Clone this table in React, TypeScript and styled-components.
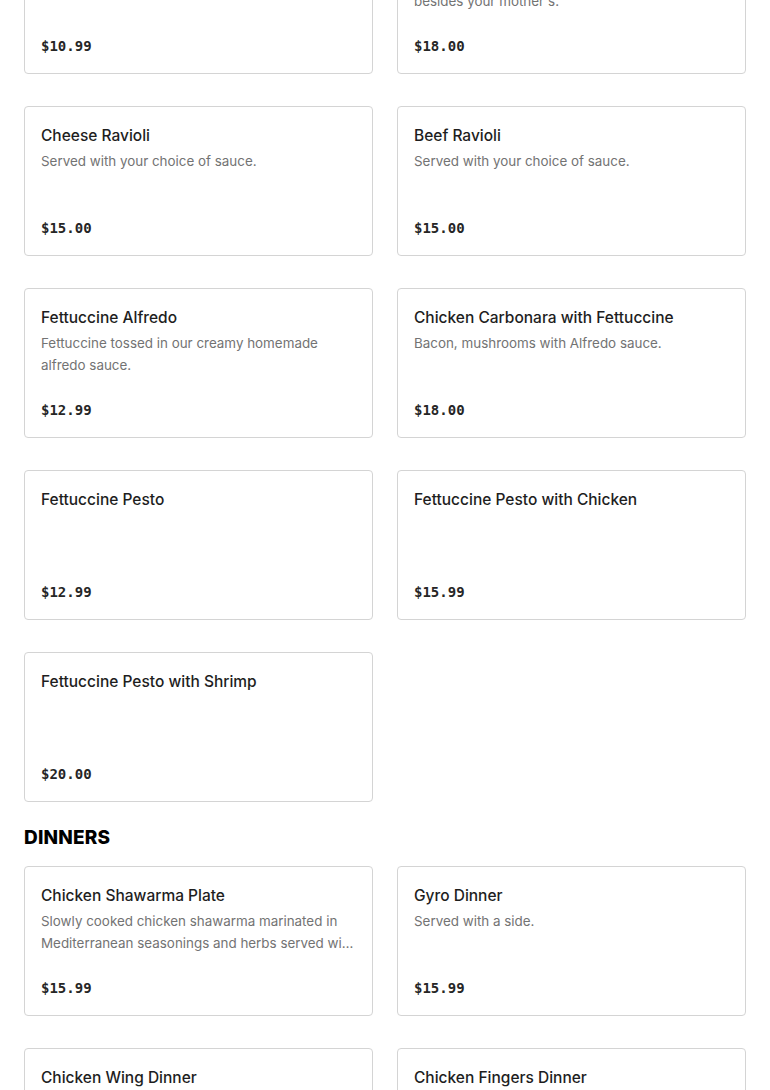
import React from "react";
import styled, { createGlobalStyle } from "styled-components";

const GlobalStyle = createGlobalStyle`
  html, body {
    margin: 0;
    padding: 0;
    background: #ffffff;
    overflow: hidden;
  }
  body {
    font-family: Inter, "Noto Sans", sans-serif;
    -webkit-font-smoothing: antialiased;
  }
`;

const Page = styled.div`
  padding: 0 24px;
  margin-top: -76px;
`;

const SectionTitle = styled.h2`
  margin: 24px 0 16px;
  font-size: 19px;
  line-height: 24px;
  font-weight: 800;
  letter-spacing: 0.2px;
  color: #000;
  text-transform: uppercase;
`;

const Grid = styled.div`
  display: grid;
  grid-template-columns: 1fr 1fr;
  column-gap: 24px;
  row-gap: 32px;
`;

const Card = styled.div`
  box-sizing: border-box;
  height: 150px;
  border: 1px solid #d4d4d4;
  border-radius: 4px;
  padding: 16px;
  display: flex;
  flex-direction: column;
  background: #fff;
`;

const Name = styled.div`
  font-size: 15.5px;
  line-height: 25px;
  font-weight: 500;
  color: #1e1e1e;
`;

const Desc = styled.div`
  margin-top: 2px;
  font-size: 13.4px;
  line-height: 22px;
  color: #737373;
  display: -webkit-box;
  -webkit-line-clamp: 2;
  -webkit-box-orient: vertical;
  overflow: hidden;
`;

const Price = styled.div`
  margin-top: auto;
  font-family: "DejaVu Sans Mono", "Liberation Mono", monospace;
  font-size: 14px;
  line-height: 22px;
  font-weight: 700;
  color: #262626;
`;

type Item = { name: string; desc?: string; price: string };

const pasta: Item[] = [
  { name: "Spaghetti with Meat Sauce", desc: "Our homemade meat sauce.", price: "$10.99" },
  {
    name: "Homemade Lasagna",
    desc: "Homemade lasagna, the best you will ever have besides your mother's.",
    price: "$18.00",
  },
  { name: "Cheese Ravioli", desc: "Served with your choice of sauce.", price: "$15.00" },
  { name: "Beef Ravioli", desc: "Served with your choice of sauce.", price: "$15.00" },
  {
    name: "Fettuccine Alfredo",
    desc: "Fettuccine tossed in our creamy homemade alfredo sauce.",
    price: "$12.99",
  },
  {
    name: "Chicken Carbonara with Fettuccine",
    desc: "Bacon, mushrooms with Alfredo sauce.",
    price: "$18.00",
  },
  { name: "Fettuccine Pesto", price: "$12.99" },
  { name: "Fettuccine Pesto with Chicken", price: "$15.99" },
  { name: "Fettuccine Pesto with Shrimp", price: "$20.00" },
];

const dinners: Item[] = [
  {
    name: "Chicken Shawarma Plate",
    desc: "Slowly cooked chicken shawarma marinated in Mediterranean seasonings and herbs served with rice, salad and garlic sauce.",
    price: "$15.99",
  },
  { name: "Gyro Dinner", desc: "Served with a side.", price: "$15.99" },
  { name: "Chicken Wing Dinner", desc: "Served with a side.", price: "$15.99" },
  { name: "Chicken Fingers Dinner", desc: "Served with a side.", price: "$15.99" },
];

function MenuCard({ item }: { item: Item }) {
  return (
    <Card>
      <Name>{item.name}</Name>
      {item.desc && <Desc>{item.desc}</Desc>}
      <Price>{item.price}</Price>
    </Card>
  );
}

function App() {
  return (
    <Page>
      <GlobalStyle />
      <Grid>
        {pasta.map((item) => (
          <MenuCard key={item.name} item={item} />
        ))}
      </Grid>
      <SectionTitle>Dinners</SectionTitle>
      <Grid>
        {dinners.map((item) => (
          <MenuCard key={item.name} item={item} />
        ))}
      </Grid>
    </Page>
  );
}

export default App;
